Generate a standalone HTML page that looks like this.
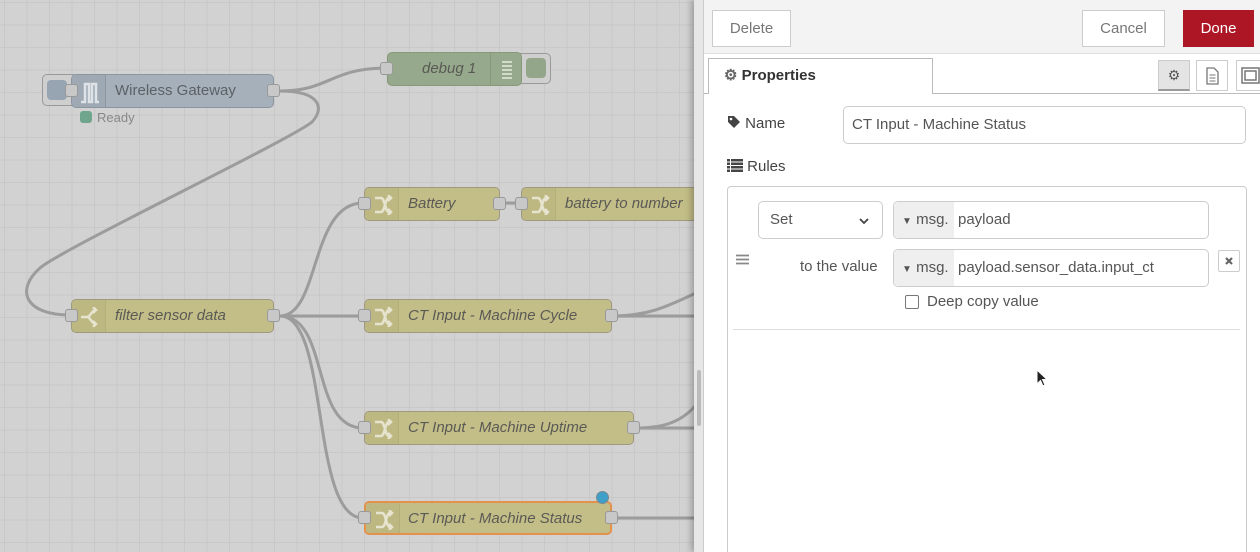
<!DOCTYPE html>
<html><head><meta charset="utf-8"><style>
*{box-sizing:border-box;margin:0;padding:0}
html,body{width:1260px;height:552px;overflow:hidden}
body{position:relative;font-family:"Liberation Sans",sans-serif;background:#d0d0d0}
#cv{position:absolute;left:0;top:0;width:696px;height:552px;background-color:#d2d2d2;
background-image:linear-gradient(#c8c8c8 1px,transparent 1px),linear-gradient(90deg,#c8c8c8 1px,transparent 1px);
background-size:22.5px 22.5px;background-position:4px 2px;overflow:hidden}
.n{position:absolute;height:34px;border:1px solid #9e9a80;border-radius:5px;background:#c3be88;font-size:15px;color:#5a5a55;font-style:italic;line-height:32px}
.n .ic{position:absolute;left:0;top:0;bottom:0;width:34px;border-right:1px solid #b3ae7a;background:#bdb882;border-radius:5px 0 0 5px}
.n .ic svg{position:absolute;left:8px;top:7px}
.n .t{position:absolute;left:43px;white-space:nowrap}
.p{position:absolute;width:13px;height:13px;border:1px solid #999;border-radius:3px;background:#c8c8c8}
#pn{position:absolute;left:694px;top:0;width:566px;height:552px;background:#e6e6e6;box-shadow:-3px 0 6px rgba(0,0,0,.25)}
#in{position:absolute;left:703px;top:0;width:557px;height:552px;background:#fff;border-left:1px solid #ccc}
.btn{position:absolute;border:1px solid #ccc;background:#fff;color:#777;font-size:15px;text-align:center}
.inp{position:absolute;border:1px solid #ccc;border-radius:5px;background:#fff;font-size:15px;color:#555}
.ms{position:absolute;left:0;top:0;bottom:0;width:60px;background:#efefef;border-radius:5px 0 0 5px;color:#555;padding-left:8px}
</style></head><body>
<div id="cv">
<svg width="696" height="552" style="position:absolute;left:0;top:0" fill="none" stroke="#9c9c9c" stroke-width="3">
<path d="M280 91 C330 91 330 68 387 68"/>
<path d="M280 91 C320 91 325 108 312 122 C290 140 60 250 40 268 C15 290 25 315 70 315"/>
<path d="M280 316 C320 316 310 203 363 203"/>
<path d="M500 203 L520 203"/>
<path d="M280 316 L363 316"/>
<path d="M280 316 C330 316 310 428 363 428"/>
<path d="M280 316 C330 316 310 518 363 518"/>
<path d="M612 316 C650 316 670 305 696 293"/>
<path d="M612 316 L696 316"/>
<path d="M634 428 C660 428 680 424 696 405"/>
<path d="M634 428 L696 428"/>
<path d="M612 518 L696 518"/>
</svg>
<svg width="0" height="0" style="position:absolute"><defs>
<g id="sh" fill="none" stroke="#e6e4cf" stroke-width="2.5"><path d="M2 3 L8 3 C12 3 12 17 16 17 L18 17"/><path d="M2 17 L8 17 C12 17 12 3 16 3 L18 3"/><path d="M15 0 L18 3 L15 6 M15 14 L18 17 L15 20"/></g>
</defs></svg>
<div style="position:absolute;left:42px;top:74px;width:36px;height:32px;border:1px solid #999;border-radius:5px;background:#cfcfcf"></div>
<div style="position:absolute;left:47px;top:80px;width:20px;height:20px;border-radius:4px;background:#97a5b2"></div>
<div class="n" style="left:71px;top:74px;width:203px;background:#a6b0ba;border-color:#8d96a0;color:#5c6166;font-style:normal"><div class="ic" style="background:#9ea9b4;border-color:#8d96a0"><svg width="20" height="22" fill="none" stroke="#dfe3e7" stroke-width="2.5"><path d="M1 20 L5 20 L5 2 L9 2 L9 20 L12 20 L12 2 L16 2 L16 20 L19 20"/></svg></div><span class="t">Wireless Gateway</span></div>
<div class="p" style="left:65px;top:84px"></div><div class="p" style="left:267px;top:84px"></div>
<div style="position:absolute;left:80px;top:111px;width:12px;height:12px;border-radius:3px;background:#6ea58c"></div>
<div style="position:absolute;left:97px;top:110px;font-size:13px;color:#888">Ready</div>
<div style="position:absolute;left:516px;top:53px;width:35px;height:31px;border:1px solid #999;border-radius:5px;background:#cfcfcf"></div>
<div style="position:absolute;left:526px;top:58px;width:20px;height:20px;border-radius:4px;background:#93a68a"></div>
<div class="n" style="left:387px;top:52px;width:135px;background:#96a98c;border-color:#879979"><span class="t" style="left:34px">debug 1</span><div style="position:absolute;right:0;top:0;bottom:0;width:31px;border-left:1px solid #879979"><svg width="31" height="32"><g stroke="#e6eadf" stroke-width="1.5"><path d="M11 9H21M11 13H21M11 17H21M11 21H21M11 25H21"/></g></svg></div></div>
<div class="p" style="left:380px;top:62px"></div>
<div class="n" style="left:71px;top:299px;width:203px"><div class="ic"><svg width="20" height="20" fill="none" stroke="#e6e4cf" stroke-width="2.5"><path d="M1 10 L7 10 C10 10 11 5 15 3 M7 10 C10 10 11 15 15 17 M13 0 L16 3 L13 6 M13 14 L16 17 L13 20"/></svg></div><span class="t">filter sensor data</span></div>
<div class="p" style="left:65px;top:309px"></div><div class="p" style="left:267px;top:309px"></div>
<div class="n" style="left:364px;top:187px;width:136px"><div class="ic"><svg width="20" height="20"><use href="#sh"/></svg></div><span class="t">Battery</span></div>
<div class="p" style="left:358px;top:197px"></div><div class="p" style="left:493px;top:197px"></div>
<div class="n" style="left:521px;top:187px;width:200px"><div class="ic"><svg width="20" height="20"><use href="#sh"/></svg></div><span class="t">battery to number</span></div>
<div class="p" style="left:515px;top:197px"></div>
<div class="n" style="left:364px;top:299px;width:248px"><div class="ic"><svg width="20" height="20"><use href="#sh"/></svg></div><span class="t">CT Input - Machine Cycle</span></div>
<div class="p" style="left:358px;top:309px"></div><div class="p" style="left:605px;top:309px"></div>
<div class="n" style="left:364px;top:411px;width:270px"><div class="ic"><svg width="20" height="20"><use href="#sh"/></svg></div><span class="t">CT Input - Machine Uptime</span></div>
<div class="p" style="left:358px;top:421px"></div><div class="p" style="left:627px;top:421px"></div>
<div class="n" style="left:364px;top:501px;width:248px;border:2px solid #e3924e"><div class="ic"><svg width="20" height="20"><use href="#sh"/></svg></div><span class="t" style="left:42px">CT Input - Machine Status</span></div>
<div class="p" style="left:358px;top:511px"></div><div class="p" style="left:605px;top:511px"></div>
<div style="position:absolute;left:596px;top:491px;width:13px;height:13px;border-radius:50%;background:#3e9fc9;border:1px solid #7a8a90"></div>
</div>
<div id="pn"></div>
<div style="position:absolute;left:697px;top:370px;width:4px;height:56px;background:#bbb;border-radius:2px"></div>
<div id="in">
<div style="position:absolute;left:0;top:0;width:557px;height:54px;background:#f3f3f3;border-bottom:1px solid #ddd"></div>
<div class="btn" style="left:8px;top:10px;width:79px;height:37px;line-height:35px">Delete</div>
<div class="btn" style="left:378px;top:10px;width:83px;height:37px;line-height:35px">Cancel</div>
<div class="btn" style="left:479px;top:10px;width:71px;height:37px;line-height:35px;background:#ad1625;border-color:#ad1625;color:#fff">Done</div>
<div style="position:absolute;left:0;top:93px;width:557px;border-top:1px solid #bbb"></div>
<div style="position:absolute;left:4px;top:58px;width:225px;height:36px;background:#fff;border:1px solid #bbb;border-bottom:none;font-weight:bold;font-size:15px;color:#333;padding:7px 0 0 15px"><span style="color:#666">⚙</span> Properties</div>
<div style="position:absolute;left:454px;top:60px;width:32px;height:31px;background:#e4e4e4;border:1px solid #ccc;border-bottom:2px solid #999;text-align:center;line-height:28px;color:#555;font-size:14px">⚙</div>
<div style="position:absolute;left:492px;top:60px;width:32px;height:31px;border:1px solid #ccc"><svg width="30" height="29"><path d="M10 7H17L21 11V23H10Z" fill="#fff" stroke="#777" stroke-width="1.3"/><path d="M12.5 14H18.5M12.5 17H18.5M12.5 20H18.5" stroke="#777"/></svg></div>
<div style="position:absolute;left:532px;top:60px;width:30px;height:31px;border:1px solid #ccc"><svg width="28" height="29" fill="none" stroke="#777" stroke-width="1.5"><rect x="5" y="7" width="17" height="15"/><rect x="8" y="10" width="11" height="9"/></svg></div>
<div style="position:absolute;left:23px;top:115px;font-size:15px;color:#444"><svg width="14" height="14" style="vertical-align:-1px"><path d="M1 1H7L13 7L7 13L1 7Z" fill="#444"/><circle cx="4" cy="4" r="1.3" fill="#fff"/></svg> Name</div>
<div class="inp" style="left:139px;top:106px;width:403px;height:38px;line-height:36px;padding-left:8px">CT Input - Machine Status</div>
<div style="position:absolute;left:23px;top:158px;font-size:15px;color:#444"><svg width="16" height="13" style="vertical-align:-1px"><g fill="#444"><rect x="0" y="0" width="3" height="2.5"/><rect x="4" y="0" width="12" height="2.5"/><rect x="0" y="3.5" width="3" height="2.5"/><rect x="4" y="3.5" width="12" height="2.5"/><rect x="0" y="7" width="3" height="2.5"/><rect x="4" y="7" width="12" height="2.5"/><rect x="0" y="10.5" width="3" height="2.5"/><rect x="4" y="10.5" width="12" height="2.5"/></g></svg> Rules</div>
<div style="position:absolute;left:23px;top:186px;width:520px;height:380px;border:1px solid #ccc;border-radius:4px"></div>
<div class="inp" style="left:54px;top:201px;width:125px;height:38px;line-height:36px;padding-left:11px">Set<svg width="12" height="8" style="position:absolute;right:12px;top:15px"><path d="M2 2L6 6L10 2" fill="none" stroke="#444" stroke-width="1.8"/></svg></div>
<div class="inp" style="left:189px;top:201px;width:316px;height:38px;line-height:36px"><div class="ms"><span style="font-size:10px">▼</span> msg.</div><span style="margin-left:64px">payload</span></div>
<svg width="14" height="12" style="position:absolute;left:32px;top:254px"><path d="M0 1.5H13M0 5.5H13M0 9.5H13" stroke="#888" stroke-width="1.7"/></svg>
<div style="position:absolute;left:96px;top:258px;font-size:15px;color:#555">to the value</div>
<div class="inp" style="left:189px;top:249px;width:316px;height:38px;line-height:36px"><div class="ms"><span style="font-size:10px">▼</span> msg.</div><span style="margin-left:64px">payload.sensor_data.input_ct</span></div>
<div style="position:absolute;left:514px;top:250px;width:22px;height:22px;border:1px solid #ccc;border-radius:2px"><svg width="20" height="20"><path d="M7 7L13 13M13 7L7 13" stroke="#666" stroke-width="2.2"/></svg></div>
<div style="position:absolute;left:201px;top:295px;width:14px;height:14px;border:1px solid #777;border-radius:2px"></div>
<div style="position:absolute;left:223px;top:293px;font-size:15px;color:#555">Deep copy value</div>
<div style="position:absolute;left:29px;top:329px;width:507px;border-top:1px solid #ddd"></div>
<svg width="14" height="20" style="position:absolute;left:332px;top:369px"><path d="M1 1L1 15L4.5 11.5L7 17L9 16L6.5 10.5L11 10.5Z" fill="#222" stroke="#fff" stroke-width="1"/></svg>
</div>
</body></html>
